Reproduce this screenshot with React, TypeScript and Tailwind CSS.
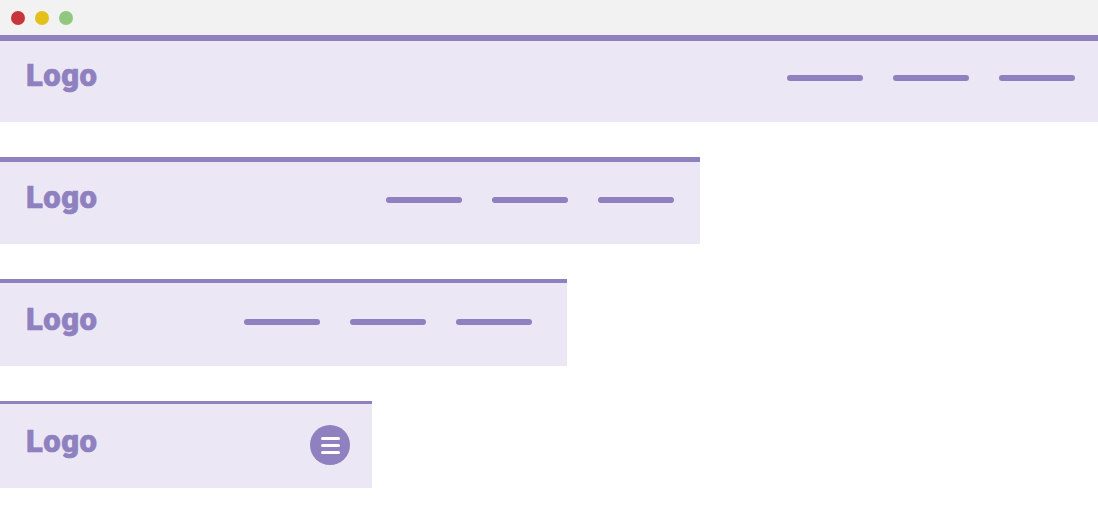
import React from "react";

function Nav() {
  return (
    <div className="mt-[16px] flex gap-[30px]">
      <div className="h-[6px] w-[76px] rounded-full bg-[#8f80bf]" />
      <div className="h-[6px] w-[76px] rounded-full bg-[#8f80bf]" />
      <div className="h-[6px] w-[76px] rounded-full bg-[#8f80bf]" />
    </div>
  );
}

function Logo() {
  return (
    <div
      className="mt-[1px] text-[31px] leading-none font-black tracking-[0.5px] text-[#8f80bf] [-webkit-text-stroke:0.6px_#8f80bf]"
      style={{ fontFamily: "Roboto, 'Liberation Sans', sans-serif" }}
    >
      Logo
    </div>
  );
}

export default function App() {
  return (
    <div className="w-[1098px] h-[514px] bg-white overflow-hidden">
      <div className="h-[35px] bg-[#f2f2f2] flex items-center gap-[10px] pl-[11px]">
        <div className="w-[14px] h-[14px] rounded-full bg-[#c8353a]" />
        <div className="w-[14px] h-[14px] rounded-full bg-[#e4c01a]" />
        <div className="w-[14px] h-[14px] rounded-full bg-[#90c880]" />
      </div>
      <div className="flex flex-col gap-[35px]">
        <header className="w-[1098px] h-[87px] border-t-[6px] border-[#8f80bf] bg-[#ebe7f5] pt-[18px] pl-[26px] pr-[23px] flex items-start justify-between">
          <Logo />
          <Nav />
        </header>
        <header className="w-[700px] h-[87px] border-t-[5px] border-[#8f80bf] bg-[#ebe7f5] pt-[19px] pl-[26px] pr-[26px] flex items-start justify-between">
          <Logo />
          <Nav />
        </header>
        <header className="w-[567px] h-[87px] border-t-[4px] border-[#8f80bf] bg-[#ebe7f5] pt-[20px] pl-[26px] pr-[35px] flex items-start justify-between">
          <Logo />
          <Nav />
        </header>
        <header className="w-[372px] h-[87px] border-t-[3px] border-[#8f80bf] bg-[#ebe7f5] pt-[21px] pl-[26px] pr-[22px] flex items-start justify-between">
          <Logo />
          <div className="w-[40px] h-[40px] rounded-full bg-[#8f80bf] flex flex-col items-center justify-center gap-[4px]">
            <div className="w-[19px] h-[3px] rounded-full bg-white" />
            <div className="w-[19px] h-[3px] rounded-full bg-white" />
            <div className="w-[19px] h-[3px] rounded-full bg-white" />
          </div>
        </header>
      </div>
    </div>
  );
}
